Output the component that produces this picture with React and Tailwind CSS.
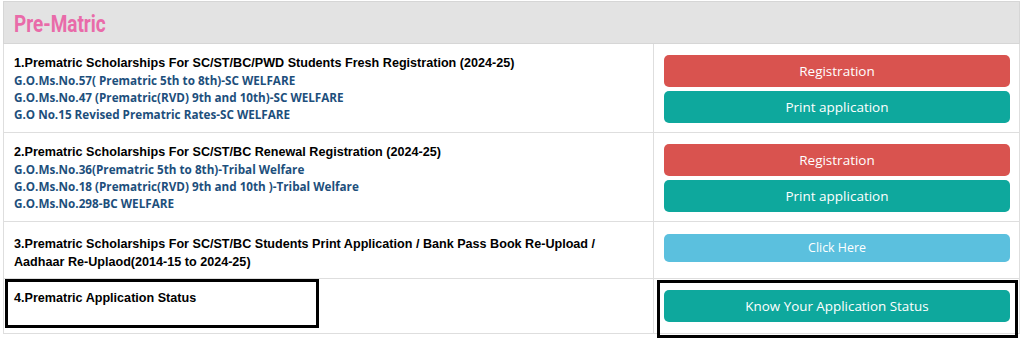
import React from "react";

const Btn = ({ color, children, extra = "" }) => (
  <div
    className={`flex items-center justify-center rounded-[5px] text-white font-['Open_Sans',sans-serif] ${color} ${extra}`}
  >
    {children}
  </div>
);

const Link = ({ children }) => (
  <div className="text-[#1d4f7c] font-['Open_Sans',sans-serif] font-bold text-[11.7px] leading-[17px]">
    {children}
  </div>
);

const Title = ({ children }) => (
  <div className="text-black font-['Liberation_Sans',Arial,sans-serif] font-bold text-[12.6px] leading-[17px]">
    {children}
  </div>
);

export default function App() {
  return (
    <div className="relative w-[1024px] h-[340px] bg-white overflow-hidden">
      <div className="ml-[3px] w-[1017px] pt-[1px]">
        <div className="h-[43px] bg-[#e3e3e3] border border-[#d6d6d6] flex items-center pl-[10px]">
          <span className="inline-block origin-left scale-x-[0.79] font-['Roboto',sans-serif] font-bold text-[24px] text-[#e96ba9] leading-none translate-y-[1px]">
            Pre-Matric
          </span>
        </div>
        <div className="grid grid-cols-[650px_1fr] border-x border-b border-[#dedede]">
          {/* Row 1 */}
          <div className="h-[89px] border-r border-b border-[#dedede] px-[10px] pt-[11px]">
            <Title>1.Prematric Scholarships For SC/ST/BC/PWD Students Fresh Registration (2024-25)</Title>
            <Link>G.O.Ms.No.57( Prematric 5th to 8th)-SC WELFARE</Link>
            <Link>G.O.Ms.No.47 (Prematric(RVD) 9th and 10th)-SC WELFARE</Link>
            <Link>G.O No.15 Revised Prematric Rates-SC WELFARE</Link>
          </div>
          <div className="h-[89px] border-b border-[#dedede] pl-[10px] pr-[9px] pt-[11px] flex flex-col gap-[4px]">
            <Btn color="bg-[#d9534f]" extra="h-[32px] text-[13.5px]">Registration</Btn>
            <Btn color="bg-[#0ea89d]" extra="h-[32px] text-[13.5px]">Print application</Btn>
          </div>
          {/* Row 2 */}
          <div className="h-[89px] border-r border-b border-[#dedede] px-[10px] pt-[11px]">
            <Title>2.Prematric Scholarships For SC/ST/BC Renewal Registration (2024-25)</Title>
            <Link>G.O.Ms.No.36(Prematric 5th to 8th)-Tribal Welfare</Link>
            <Link>G.O.Ms.No.18 (Prematric(RVD) 9th and 10th )-Tribal Welfare</Link>
            <Link>G.O.Ms.No.298-BC WELFARE</Link>
          </div>
          <div className="h-[89px] border-b border-[#dedede] pl-[10px] pr-[9px] pt-[11px] flex flex-col gap-[4px]">
            <Btn color="bg-[#d9534f]" extra="h-[32px] text-[13.5px]">Registration</Btn>
            <Btn color="bg-[#0ea89d]" extra="h-[32px] text-[13.5px]">Print application</Btn>
          </div>
          {/* Row 3 */}
          <div className="h-[57px] border-r border-b border-[#dedede] px-[10px] pt-[13px]">
            <div className="w-[600px] text-black font-['Liberation_Sans',Arial,sans-serif] font-bold text-[12.6px] leading-[18px]">
              3.Prematric Scholarships For SC/ST/BC Students Print Application / Bank Pass Book Re-Upload / Aadhaar Re-Uplaod(2014-15 to 2024-25)
            </div>
          </div>
          <div className="h-[57px] border-b border-[#dedede] pl-[10px] pr-[9px] pt-[12px]">
            <Btn color="bg-[#5bc0de]" extra="h-[28px] text-[12.4px]">Click Here</Btn>
          </div>
          {/* Row 4 */}
          <div className="h-[54px] border-r border-[#dedede] px-[10px] pt-[11px]">
            <Title>4.Prematric Application Status</Title>
          </div>
          <div className="h-[54px] pl-[10px] pr-[9px] pt-[11px]">
            <Btn color="bg-[#0ea89d]" extra="h-[32px] text-[13.4px]">Know Your Application Status</Btn>
          </div>
        </div>
      </div>
      {/* annotation boxes */}
      <div className="absolute left-[5px] top-[279px] w-[314px] h-[49px] border-[3px] border-black pointer-events-none" />
      <div className="absolute left-[657px] top-[280px] w-[361px] h-[58px] border-[3px] border-black pointer-events-none" />
    </div>
  );
}
